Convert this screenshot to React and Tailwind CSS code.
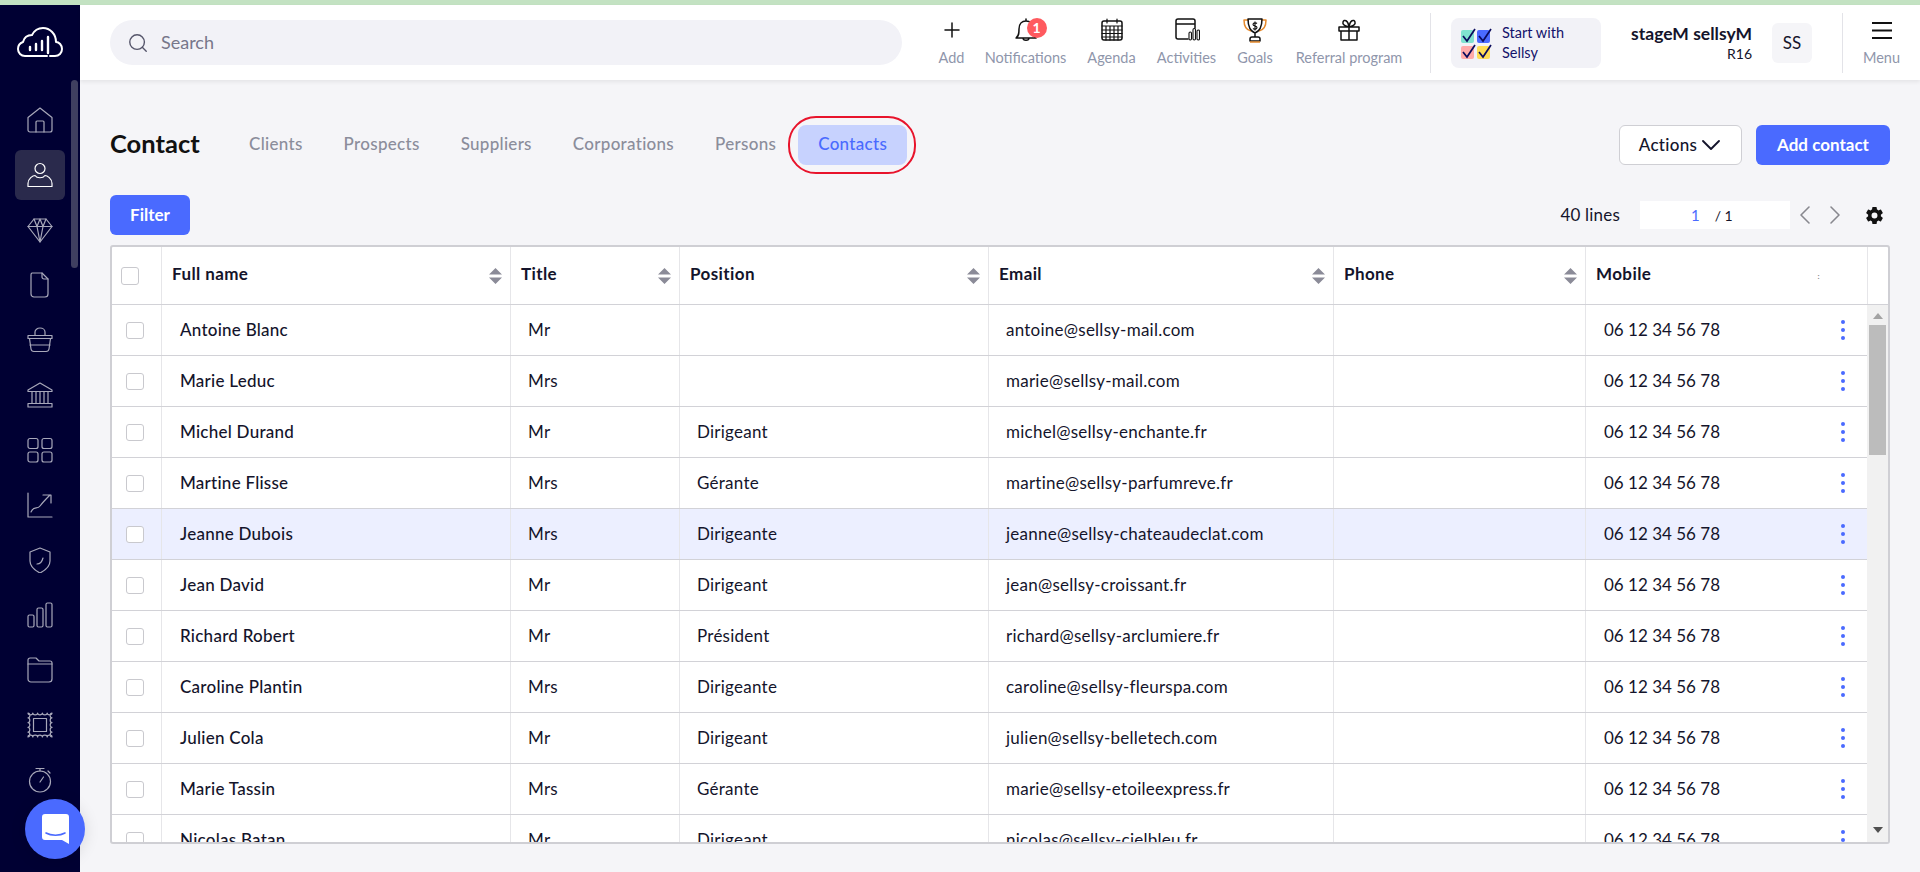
import React from "react";
import { Plus, ChevronDown, ChevronLeft, ChevronRight, Search } from "lucide-react";
import { IoSettingsSharp } from "react-icons/io5";

const rows = [
  ["Antoine Blanc", "Mr", "", "antoine@sellsy-mail.com"],
  ["Marie Leduc", "Mrs", "", "marie@sellsy-mail.com"],
  ["Michel Durand", "Mr", "Dirigeant", "michel@sellsy-enchante.fr"],
  ["Martine Flisse", "Mrs", "Gérante", "martine@sellsy-parfumreve.fr"],
  ["Jeanne Dubois", "Mrs", "Dirigeante", "jeanne@sellsy-chateaudeclat.com"],
  ["Jean David", "Mr", "Dirigeant", "jean@sellsy-croissant.fr"],
  ["Richard Robert", "Mr", "Président", "richard@sellsy-arclumiere.fr"],
  ["Caroline Plantin", "Mrs", "Dirigeante", "caroline@sellsy-fleurspa.com"],
  ["Julien Cola", "Mr", "Dirigeant", "julien@sellsy-belletech.com"],
  ["Marie Tassin", "Mrs", "Gérante", "marie@sellsy-etoileexpress.fr"],
  ["Nicolas Batan", "Mr", "Dirigeant", "nicolas@sellsy-cielbleu.fr"],
];

// sidebar icons, all on a 26px box
const Side = ({ children, active }) => (
  <div className={`flex h-[50px] w-[50px] shrink-0 items-center justify-center rounded-md ${active ? "bg-[#2a2a4c] text-white" : "text-[#a8a8ba]"}`}>
    <svg width="26" height="26" viewBox="0 0 26 26" fill="none" stroke="currentColor" strokeWidth="1.2" strokeLinejoin="round" strokeLinecap="round">
      {children}
    </svg>
  </div>
);

const stamp =
  "M1 1" +
  "a2.4 1.8 0 0 0 4.8 0".repeat(5) +
  "a1.8 2.4 0 0 0 0 4.8".repeat(5) +
  "a2.4 1.8 0 0 0 -4.8 0".repeat(5) +
  "a1.8 2.4 0 0 0 0 -4.8".repeat(5) +
  "z";

const sideIcons = [
  <>
    <path d="M1 10.500 13 1l12 9.500V23a2 2 0 0 1-2 2H3a2 2 0 0 1-2-2z" />
    <path d="M9 25V15a1 1 0 0 1 1-1h6a1 1 0 0 1 1 1v10" />
  </>,
  <>
    <circle cx="13" cy="6.500" r="5" />
    <path d="M1 24.500v-3c0-5 5-8 7-8 2 3 8 3 10 0 2 0 7 3 7 8v3z" />
  </>,
  <>
    <path d="M7 2h12l6 7.500L13 25 1 9.500z" />
    <path d="M1 9.500h24M7 2l3 7.500L13 25l3-15.500L19 2M10 9.500 13 2l3 7.500" />
  </>,
  <>
    <path d="M5 1h10l6 6v15a3 3 0 0 1-3 3H7a3 3 0 0 1-3-3V3a2 2 0 0 1 1-2z" />
    <path d="M15 1v4a2 2 0 0 0 2 2h4" />
  </>,
  <>
    <path d="M1 8.500h24v3H1zM2.500 11.500 4 22a3 3 0 0 0 3 2.500h12a3 3 0 0 0 3-2.500l1.500-10.500" />
    <path d="M8 8.500V5a5 4 0 0 1 10 0v3.500M3 18h20" />
  </>,
  <>
    <path d="M13 1 1 8v1.500h24V8zM3 21.500h20M1 25h24V21.500H1z" />
    <path d="M5 10v11M9 10v11M13 10v11M17 10v11M21 10v11" />
  </>,
  <>
    <rect x="1" y="1.500" width="10" height="10" rx="2" />
    <rect x="15" y="1.500" width="10" height="10" rx="2" />
    <rect x="1" y="15" width="10" height="10" rx="2" />
    <rect x="15" y="15" width="10" height="10" rx="2" />
  </>,
  <>
    <path d="M1 1v24h24" />
    <path d="M4 20c3-7 6-2 9-6 3-4 6-7 10-11M16 3h8v8" />
  </>,
  <>
    <path d="M13 1 23 5v9c0 6-6 10-10 12C9 24 3 20 3 14V5z" />
    <path d="M10 17c3 0 5-2 6-6" />
  </>,
  <>
    <rect x="1" y="13" width="6" height="12" rx="1.500" />
    <rect x="10" y="6" width="6" height="19" rx="1.500" />
    <rect x="19" y="1" width="6" height="24" rx="1.500" />
  </>,
  <>
    <path d="M1 5V3a2 2 0 0 1 2-2h6l3 3h11a2 2 0 0 1 2 2v16a3 3 0 0 1-3 3H4a3 3 0 0 1-3-3z" />
    <path d="M1 7h24" />
  </>,
  <>
    <rect x="6.500" y="6.500" width="13" height="13" />
    <path d={stamp} />
  </>,
  <>
    <circle cx="13" cy="14.500" r="10.500" />
    <path d="M9 1.500h8M13 1.500V4M13 15l3.500-5M21 4l2 2" />
  </>,
];

const SortIcon = () => (
  <svg width="13" height="16" viewBox="0 0 13 16" className="fill-[#8b8b98]">
    <path d="M6.500 0 13 6.500H0zM0 9.500h13L6.500 16z" />
  </svg>
);

const Nav = ({ label, w, children }) => (
  <div className={`flex shrink-0 flex-col items-center ${w}`}>
    <div className="relative flex h-[30px] items-center justify-center">{children}</div>
    <span className="mt-[5px] whitespace-nowrap text-[14.500px] leading-[16px] text-[#8f96ab]">{label}</span>
  </div>
);

const Stroke = ({ children }) => (
  <svg width="26" height="26" viewBox="0 0 26 26" fill="none" stroke="#111" strokeWidth="1.500" strokeLinejoin="round" strokeLinecap="round">
    {children}
  </svg>
);

function Header() {
  return (
    <header className="relative z-10 flex h-[75px] shrink-0 items-center bg-white pl-[30px] shadow-[0_2px_4px_rgba(0,0,0,0.07)]">
      <div className="flex h-[45px] w-[792px] shrink-0 items-center rounded-full bg-[#f2f2f7] pl-[17px]">
        <Search size={22} strokeWidth={1.500} className="text-[#55556a]" />
        <span className="ml-[12px] text-[18px] text-[#77778a]">Search</span>
      </div>
      <div className="ml-[36px] flex shrink-0 -translate-y-[2px] items-start gap-[20px]">
        <Nav label="Add" w="w-[27px]">
          <Plus size={24} strokeWidth={1.500} className="text-[#111]" />
        </Nav>
        <Nav label="Notifications" w="w-[81px]">
          <Stroke>
            <path d="M3 21c3-2 3-5 3-9 0-5 3-8 7-8s7 3 7 8c0 4 0 7 3 9zM10 21c0 3 6 3 6 0M13 4V2" />
          </Stroke>
          <span className="absolute left-[14px] top-[3px] flex h-[20px] w-[20px] items-center justify-center rounded-full bg-[#ff5a5f] text-[14px] font-bold leading-none text-white">1</span>
        </Nav>
        <Nav label="Agenda" w="w-[51px]">
          <Stroke>
            <rect x="3" y="4" width="20" height="19" rx="2" />
            <path d="M3 9h20M8 2v4M18 2v4M3 13h20M3 16.500h20M3 20h20M7 9v14M11 9v14M15 9v14M19 9v14" strokeWidth="1.200" />
          </Stroke>
        </Nav>
        <Nav label="Activities" w="w-[59px]">
          <Stroke>
            <path d="M14 22H4a2 2 0 0 1-2-2V4a2 2 0 0 1 2-2h15a2 2 0 0 1 2 2v7M2 7h19" />
            <rect x="15" y="15" width="2.500" height="8" rx="1.200" strokeWidth="1.100" />
            <rect x="19" y="11.500" width="2.500" height="11.500" rx="1.200" strokeWidth="1.100" />
            <rect x="23" y="13" width="2.500" height="10" rx="1.200" strokeWidth="1.100" />
          </Stroke>
        </Nav>
        <Nav label="Goals" w="w-[38px]">
          <svg width="26" height="26" viewBox="0 0 26 26" fill="none" strokeWidth="1.500" strokeLinejoin="round">
            <path d="M7 3H2c0 6 2 10 7 11M19 3h5c0 6-2 10-7 11" stroke="#e58a2e" />
            <path d="M6 2h14c0 8-2 12-7 14-5-2-7-6-7-14zM13 16v4M8 24h10v-2a2 2 0 0 0-2-2h-6a2 2 0 0 0-2 2z" stroke="#111" />
            <path d="M8 25h10" stroke="#e58a2e" />
            <path d="M15 6.500c-1-1-4-1-4 1s4 1 4 3-3 2-4 1M13 4.500v9" stroke="#111" strokeWidth="1.100" />
          </svg>
        </Nav>
        <Nav label="Referral program" w="w-[110px]">
          <Stroke>
            <path d="M3 10h20v4H3zM5 14v9h16v-9M13 10v13M13 10c-3-1-7-2-6-5s5-2 6 5c1-7 5-8 6-5s-3 4-6 5z" />
          </Stroke>
        </Nav>
      </div>
      <div className="ml-[26px] h-[60px] w-px shrink-0 bg-[#e3e3e8]" />
      <div className="ml-[20px] flex h-[50px] w-[150px] shrink-0 items-center rounded-lg bg-[#f2f2f7] pl-[10px]">
        <svg width="31" height="32" viewBox="0 0 31 32" fill="none" className="shrink-0">
          <rect x="0" y="3" width="13" height="13" rx="2" fill="#80e2cf" />
          <rect x="16" y="3" width="13" height="13" rx="2" fill="#4a6aff" />
          <rect x="0" y="19" width="13" height="13" rx="2" fill="#ffaaaa" />
          <rect x="16" y="19" width="13" height="13" rx="2" fill="#ffdd55" />
          <path d="M2 9l4 5 8-12M18 9l4 5 8-12M2 25l4 5 8-12M18 25l4 5 8-12" stroke="#0a0a5c" strokeWidth="1.700" />
        </svg>
        <span className="ml-[10px] text-[14.500px] leading-[20px] text-[#12126b]">Start with<br />Sellsy</span>
      </div>
      <div className="ml-auto flex flex-col items-end">
        <span className="whitespace-nowrap text-[17.500px] font-bold leading-[20px] text-[#14142b]">stageM sellsyM</span>
        <span className="mt-[2px] text-[14px] leading-[16px] text-[#14142b]">R16</span>
      </div>
      <div className="ml-[20px] flex h-[40px] w-[40px] shrink-0 items-center justify-center rounded-md bg-[#f5f5f8] text-[17px] text-[#14142b]">SS</div>
      <div className="ml-[30px] h-[60px] w-px shrink-0 bg-[#e3e3e8]" />
      <div className="flex w-[77px] shrink-0 -translate-y-[2px] flex-col items-center">
        <svg width="22" height="30" viewBox="0 0 22 30" stroke="#111" strokeWidth="2">
          <path d="M1 8h20M1 15.500h20M1 23h20" />
        </svg>
        <span className="mt-[5px] text-[14.500px] leading-[16px] text-[#8f96ab]">Menu</span>
      </div>
    </header>
  );
}

const cols = ["w-[349px]", "w-[169px]", "w-[309px]", "w-[345px]", "w-[252px]", "w-[282px]"];

function Table() {
  return (
    <div className="mt-[10px] flex h-[599px] w-[1780px] flex-col overflow-hidden rounded-[3px] border-2 border-[#cfcfd4] bg-white">
      <div className="flex h-[58px] shrink-0 border-b border-[#d2d2d7]">
        <div className="flex w-[49px] shrink-0 items-center pl-[9px]">
          <div className="h-[18px] w-[18px] rounded-[3px] border border-[#c9c9ce] bg-white" />
        </div>
        {["Full name", "Title", "Position", "Email", "Phone", "Mobile"].map((h, i) => (
          <div key={h} className={`flex shrink-0 items-center justify-between border-l border-[#e6e6e9] pl-[10px] pr-[8px] text-[17px] font-bold tracking-[0.4px] text-[#14142b] ${cols[i]}`}>
            <span className="-translate-y-[2px]">{h}</span>
            {i < 5 ? <SortIcon /> : <span className="mr-[39px] text-[8px] text-[#888]">:</span>}
          </div>
        ))}
        <div className="flex-1 border-l border-[#e6e6e9]" />
      </div>
      <div className="flex min-h-0 flex-1">
        <div className="min-w-0 flex-1 overflow-hidden">
          {rows.map((r) => (
            <div key={r[0]} className={`flex h-[51px] border-b border-[#d2d2d7] text-[17px] tracking-[0.25px] text-[#14142b] ${r[0] === "Jeanne Dubois" ? "bg-[#ecefff]" : ""}`}>
              <div className="flex w-[49px] shrink-0 items-center pl-[14px]">
                <div className="h-[17px] w-[18px] rounded-[3px] border border-[#c9c9ce] bg-white" />
              </div>
              {[r[0], r[1], r[2], r[3], ""].map((v, i) => (
                <div key={i} className={`flex shrink-0 items-center border-l border-[#e6e6e9] pb-[1px] ${i === 0 ? "pl-[18px] font-medium" : "pl-[17px]"} ${cols[i]}`}>
                  {v}
                </div>
              ))}
              <div className="flex w-[282px] shrink-0 items-center border-l border-[#e6e6e9] pb-[1px] pl-[18px] tracking-[0px]">
                06 12 34 56 78
                <span className="ml-auto mr-[22px] flex flex-col gap-[4px]">
                  <span className="h-[4px] w-[4px] rounded-full bg-[#4a6aff]" />
                  <span className="h-[4px] w-[4px] rounded-full bg-[#4a6aff]" />
                  <span className="h-[4px] w-[4px] rounded-full bg-[#4a6aff]" />
                </span>
              </div>
            </div>
          ))}
        </div>
        <div className="flex w-[21px] shrink-0 flex-col items-center bg-[#f1f1f1]">
          <div className="mb-[6px] mt-[8px] h-0 w-0 border-x-[5px] border-b-[6px] border-x-transparent border-b-[#a3a3a3]" />
          <div className="h-[130px] w-[17px] bg-[#bcbcbc]" />
          <div className="mb-[9px] mt-auto h-0 w-0 border-x-[5px] border-t-[6px] border-x-transparent border-t-[#505050]" />
        </div>
      </div>
    </div>
  );
}

export default function App() {
  return (
    <div className="relative flex h-[872px] w-[1920px] flex-col overflow-hidden bg-[#f5f5f8] font-['Lato',sans-serif]">
      <div className="h-[5px] shrink-0 bg-[#c3e2c2]" />
      <div className="flex min-h-0 flex-1">
        <aside className="relative flex w-[80px] shrink-0 flex-col items-center bg-[#000033]">
          <svg width="46" height="32" viewBox="0 0 46 32" fill="none" stroke="white" strokeWidth="2" strokeLinecap="round" strokeLinejoin="round" className="mt-[21px] shrink-0">
            <path d="M33 30h5c4 0 7-3 7-7s-3-7-6-7c0-8-6-14-13-14-5 0-9 3-11 7-6 0-8 3-9 7-3 1-5 4-5 7 0 4 3 7 7 7h22" />
            <path d="M13 24v-3M19 24v-6M25 24v-9M31 27V11" strokeWidth="2.400" />
          </svg>
          <div className="mt-[37px] flex w-full flex-col items-center gap-[5px]">
            {sideIcons.map((ic, i) => (
              <Side key={i} active={i === 1}>{ic}</Side>
            ))}
          </div>
          <div className="absolute left-[71px] top-[75px] h-[188px] w-[7px] rounded-full bg-[#3f3f60]" />
        </aside>
        <div className="flex min-w-0 flex-1 flex-col">
          <Header />
          <main className="flex flex-col px-[30px] pt-[45px]">
            <div className="flex h-[40px] items-center">
              <h1 className="w-[139px] -translate-y-[2px] text-[25.500px] font-bold text-[#111]">Contact</h1>
              <div className="flex items-center text-[17px] font-medium tracking-[0.3px] text-[#8b8d9b]">
                <span className="-translate-y-px">Clients</span>
                <span className="ml-[41px] -translate-y-px">Prospects</span>
                <span className="ml-[41px] -translate-y-px">Suppliers</span>
                <span className="ml-[41px] -translate-y-px">Corporations</span>
                <span className="ml-[41px] -translate-y-px">Persons</span>
                <span className="relative ml-[22px] flex h-[40px] w-[109px] items-center justify-center rounded-lg bg-[#c7d2fe] text-[#4a6aff]">
                  <span className="-translate-y-px">Contacts</span>
                  <span className="absolute -inset-y-[9px] -left-[10px] -right-[9px] rounded-[28px] border-2 border-[#e8142c]" />
                </span>
              </div>
              <button className="ml-auto flex h-[40px] w-[123px] items-center justify-center rounded-md border border-[#cfcfd4] bg-white pl-[2px] text-[17px] font-medium tracking-[0.3px] text-[#14142b]">
                Actions <ChevronDown size={32} strokeWidth={1.400} className="-mr-[3px] ml-[-2px]" />
              </button>
              <button className="ml-[14px] h-[40px] w-[134px] rounded-md bg-[#4a6aff] text-[17px] font-bold text-white">Add contact</button>
            </div>
            <div className="mt-[30px] flex h-[40px] items-center">
              <button className="h-[40px] w-[80px] rounded-md bg-[#4a6aff] text-[17px] font-bold text-white">Filter</button>
              <span className="ml-auto text-[17px] tracking-[0.2px] text-[#14142b]">40 lines</span>
              <div className="ml-[20px] flex h-[28px] w-[150px] items-center bg-white pl-[51px] text-[15px] text-[#14142b]">
                <span className="text-[#4a6aff]">1</span>
                <span className="ml-[15px] text-[14px]">/ 1</span>
              </div>
              <ChevronLeft size={32} strokeWidth={1.200} className="ml-[-1px] text-[#88888f]" />
              <ChevronRight size={32} strokeWidth={1.200} className="ml-[-2px] text-[#88888f]" />
              <IoSettingsSharp size={19} className="ml-[14px] mr-[6px] text-[#111]" />
            </div>
            <Table />
          </main>
        </div>
      </div>
      <div className="absolute left-[25px] top-[799px] flex h-[60px] w-[60px] items-center justify-center rounded-full bg-[#4a6aff] shadow-[0_2px_16px_rgba(0,0,0,0.12)]">
        <svg width="27" height="30" viewBox="0 0 27 30">
          <path d="M3 0h21a3 3 0 0 1 3 3v27l-7-4H3a3 3 0 0 1-3-3V3a3 3 0 0 1 3-3z" fill="white" />
          <path d="M4 19c5 3 14 3 19 0" fill="none" stroke="#4a6aff" strokeWidth="1.600" strokeLinecap="round" />
        </svg>
      </div>
    </div>
  );
}
